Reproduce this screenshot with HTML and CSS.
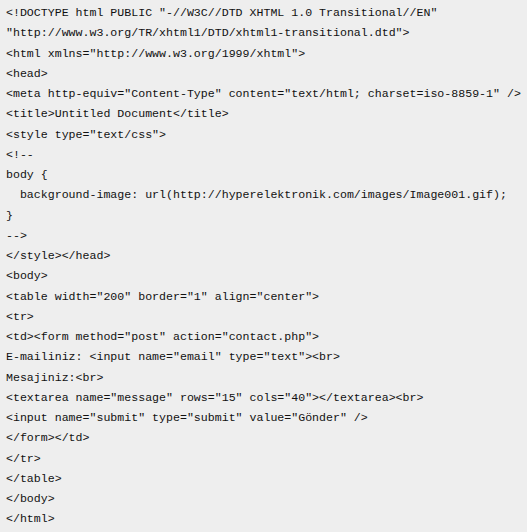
FILE: index.html
```html
<!DOCTYPE html>
<html>
<head>
<meta charset="utf-8">
<link rel="stylesheet" href="styles.css">
</head>
<body>
<pre class="code">&lt;!DOCTYPE html PUBLIC "-//W3C//DTD XHTML 1.0 Transitional//EN"
"http://www.w3.org/TR/xhtml1/DTD/xhtml1-transitional.dtd"&gt;
&lt;html xmlns="http://www.w3.org/1999/xhtml"&gt;
&lt;head&gt;
&lt;meta http-equiv="Content-Type" content="text/html; charset=iso-8859-1" /&gt;
&lt;title&gt;Untitled Document&lt;/title&gt;
&lt;style type="text/css"&gt;
&lt;!--
body {
  background-image: url(http://hyperelektronik.com/images/Image001.gif);
}
--&gt;
&lt;/style&gt;&lt;/head&gt;
&lt;body&gt;
&lt;table width="200" border="1" align="center"&gt;
&lt;tr&gt;
&lt;td&gt;&lt;form method="post" action="contact.php"&gt;
E-mailiniz: &lt;input name="email" type="text"&gt;&lt;br&gt;
Mesajiniz:&lt;br&gt;
&lt;textarea name="message" rows="15" cols="40"&gt;&lt;/textarea&gt;&lt;br&gt;
&lt;input name="submit" type="submit" value="Gönder" /&gt;
&lt;/form&gt;&lt;/td&gt;
&lt;/tr&gt;
&lt;/table&gt;
&lt;/body&gt;
&lt;/html&gt;</pre>
</body>
</html>
```
FILE: styles.css
```css
html, body {
  margin: 0;
  padding: 0;
  background: #eeeeee;
}
.code {
  margin: 0;
  padding: 3px 0 0 6px;
  font-family: "Liberation Mono", "Courier New", monospace;
  font-size: 11.6px;
  line-height: 20.25px;
  color: #111111;
  white-space: pre;
}
```
